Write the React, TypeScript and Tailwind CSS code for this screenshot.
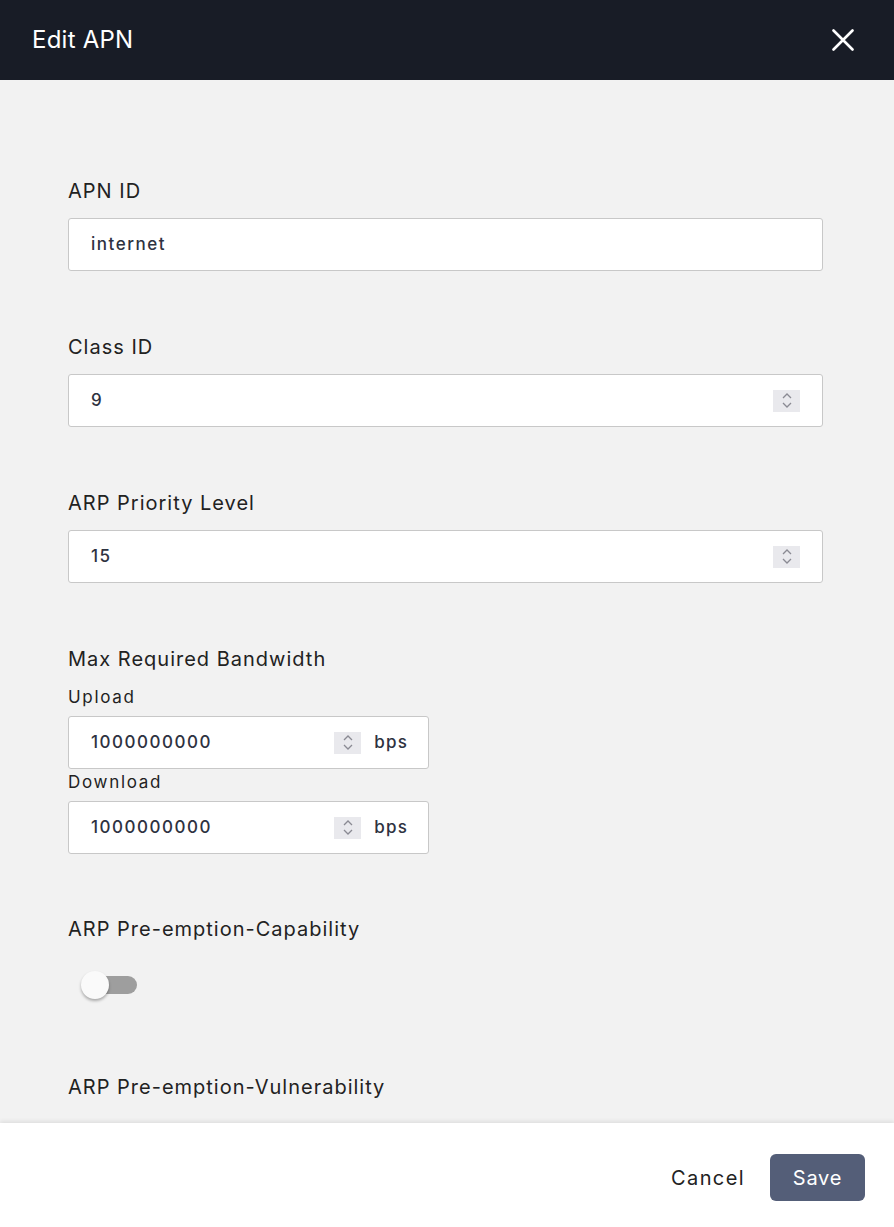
import React, { useState } from 'react';

const Spinner = () => (
  <div className="flex h-[22px] w-[27px] flex-col items-center justify-center gap-[3px] bg-[#e9e9ed]">
    <svg width="10" height="6" viewBox="0 0 10 6" fill="none">
      <path d="M1 5 L5 1 L9 5" stroke="#8a8a93" strokeWidth="1.3" />
    </svg>
    <svg width="10" height="6" viewBox="0 0 10 6" fill="none">
      <path d="M1 1 L5 5 L9 1" stroke="#8a8a93" strokeWidth="1.3" />
    </svg>
  </div>
);

const Label = ({ children }: { children: React.ReactNode }) => (
  <div className="text-[20px] leading-[28px] tracking-[0.05em] text-[#222222]">{children}</div>
);

const SubLabel = ({ children }: { children: React.ReactNode }) => (
  <div className="text-[17px] leading-[24px] tracking-[0.1em] text-[#222222]">{children}</div>
);

const TextBox = ({ value, spinner }: { value: string; spinner?: boolean }) => (
  <div className="mt-[13px] flex h-[53px] w-full items-center rounded-[3px] border border-[#c8c8c8] bg-white pl-[22px] pr-[22px]">
    <span className="flex-1 text-[17px] font-medium tracking-[0.09em] text-[#2e3241]">{value}</span>
    {spinner && <Spinner />}
  </div>
);

const BpsBox = ({ value }: { value: string }) => (
  <div className="mt-[7px] flex h-[53px] w-[361px] items-center rounded-[3px] border border-[#c8c8c8] bg-white pl-[22px] pr-[20px]">
    <span className="flex-1 text-[17px] font-medium tracking-[0.09em] text-[#2e3241]">{value}</span>
    <Spinner />
    <span className="ml-[13px] text-[17px] font-medium tracking-[0.07em] text-[#2e3241]">bps</span>
  </div>
);

export default function App() {
  const [on, setOn] = useState(false);

  return (
    <div className="flex h-screen flex-col overflow-hidden bg-[#f2f2f2] font-['Inter','Liberation_Sans',sans-serif]">
      {/* Header */}
      <div className="flex h-[80px] shrink-0 items-center justify-between bg-[#181c26] pl-8 pr-[40px]">
        <h1 className="text-[24px] font-normal tracking-[0.01em] text-white">Edit APN</h1>
        <button className="text-white">
          <svg width="22" height="22" viewBox="0 0 22 22" fill="none">
            <path d="M1.5 1.5 L20.5 20.5 M20.5 1.5 L1.5 20.5" stroke="white" strokeWidth="2.6" strokeLinecap="round" />
          </svg>
        </button>
      </div>

      {/* Form */}
      <div className="flex-1 overflow-hidden pl-[68px] pr-[71px] pt-[97px]">
        <Label>APN ID</Label>
        <TextBox value="internet" />

        <div className="mt-[62px]">
          <Label>Class ID</Label>
          <TextBox value="9" spinner />
        </div>

        <div className="mt-[62px]">
          <Label>ARP Priority Level</Label>
          <TextBox value="15" spinner />
        </div>

        <div className="mt-[62px]">
          <Label>Max Required Bandwidth</Label>
          <div className="mt-[12px]">
            <SubLabel>Upload</SubLabel>
          </div>
          <BpsBox value="1000000000" />
          <div className="mt-[1px]">
            <SubLabel>Download</SubLabel>
          </div>
          <BpsBox value="1000000000" />
        </div>

        <div className="mt-[61px]">
          <Label>ARP Pre-emption-Capability</Label>
          <button
            onClick={() => setOn(!on)}
            className="relative mt-[27px] ml-[13px] block h-[30px] w-[57px]"
          >
            <span className="absolute left-[1px] top-[6px] h-[18px] w-[55px] rounded-full bg-[#9e9e9e]" />
            <span
              className={`absolute top-[1px] h-[28px] w-[28px] rounded-full bg-[#fafafa] shadow-[0_2px_3px_rgba(0,0,0,0.3)] ${on ? 'left-[28px]' : 'left-0'}`}
            />
          </button>
        </div>

        <div className="mt-[73px]">
          <Label>ARP Pre-emption-Vulnerability</Label>
        </div>
      </div>

      {/* Footer */}
      <div className="relative flex h-[104px] shrink-0 items-center justify-end gap-[25px] bg-white pr-[29px] pt-[5px] shadow-[0_-2px_4px_rgba(0,0,0,0.08)]">
        <button className="text-[20px] tracking-[0.07em] text-[#222222]">Cancel</button>
        <button className="h-[47px] w-[95px] rounded-[6px] bg-[#545e78] text-[20px] tracking-[0.04em] text-white">Save</button>
      </div>
    </div>
  );
}
